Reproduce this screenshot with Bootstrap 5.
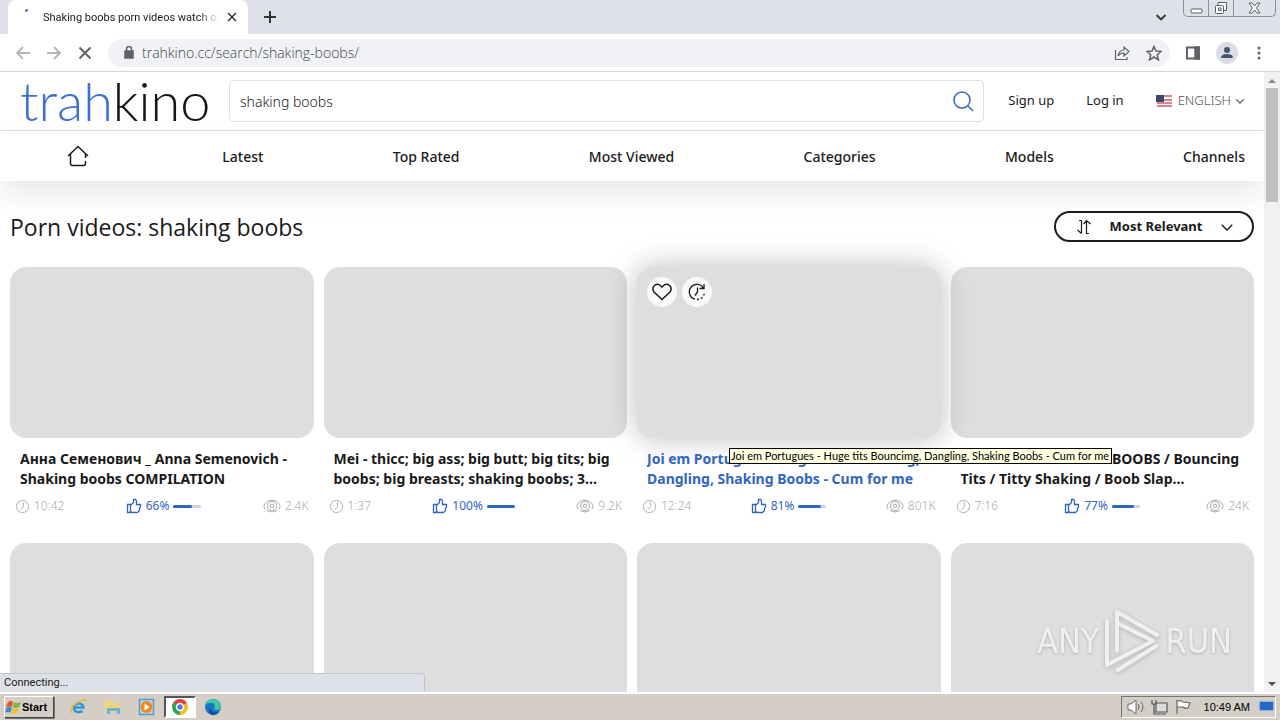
<!DOCTYPE html>
<html lang="en">
<head>
<meta charset="utf-8">
<meta name="viewport" content="width=device-width, initial-scale=1">
<title>trahkino</title>
<link rel="stylesheet" href="https://cdn.jsdelivr.net/npm/bootstrap@5.3.0/dist/css/bootstrap.min.css">
<style>
:root{--ink:#1a1a1a;--blue:#3166c0;--gray:#ababab}
body{font-family:"Noto Sans",sans-serif;font-size:14px;color:var(--ink);height:100vh;fill:none;stroke:currentColor;stroke-width:1.5}
svg{flex:none;display:block}
button{border:0;background:none;padding:0;color:inherit}
a{color:inherit;text-decoration:none}
.tabstrip{height:34px;flex:none;background:#dee1e8}
.tab-active{width:240px;height:34px;margin-left:8px;padding-left:16px;padding-right:11px;background:#fff;border-radius:8px 8px 0 0;font:11px Roboto,sans-serif}
.tab-label{width:176px;overflow:hidden;white-space:nowrap;-webkit-mask-image:linear-gradient(90deg,#000 88%,transparent)}
.win-controls{height:17px;border:1px solid #8d9097;border-top:0;border-radius:0 0 5px 5px;color:#5c5f66}
.win-controls button{width:25px;display:flex;justify-content:center;align-items:center;border-right:1px solid #8d9097}
.win-controls button:last-child{width:41px;border:0}
.toolbar{height:38px;flex:none;border-bottom:1px solid #d5d5d5;color:#5f6368}
.omnibox{height:28px;border-radius:14px;background:#f0f2f5}
.omnibox input{border:0;background:none;outline:0;color:#44474b;font:300 14px "Open Sans",sans-serif}
.avatar{width:22px;height:22px;background:#dadde4;color:#48536f}
.viewport{min-height:0}
.page-scroll{overflow:hidden;min-width:0}
.site-header{height:59px;border-bottom:1px solid #ddd;padding:0 19px 0 20px}
.logo{font:300 54px/58px Lato,sans-serif;width:193px;color:#151515}
.logo span{color:#3c70d8}
.search-box{height:42px;border:1px solid #dcdfe5;border-radius:5px;padding:0 9px 0 10px}
.search-box input{border:0;outline:0;min-width:0;font-size:14px;color:#222;font-weight:300}
.account{font-size:13px}
.lang{color:#555;font-size:13px;font-weight:300}
.site-nav{height:50px;padding:0 19px 0 67px;font-weight:500;box-shadow:0 14px 30px rgba(0,0,0,.09)}
.home-link{padding-right:4px}
.headline{font:400 23px/32px "Open Sans",sans-serif;margin:0}
.sort-btn{width:200px;height:31px;border:2px solid #1b1b1b;border-radius:16px;font-size:13px;font-weight:700;padding:0 18px 0 20px}
.listing{padding:30px 10px 0}
.video-grid{display:grid;grid-template-columns:repeat(4,1fr);gap:27px 10px;margin-top:24px}
.thumb{height:171px;border-radius:16px;background:#dedede;padding:10px;gap:5px}
.video{height:249px}
.video.is-hover{z-index:2}
.is-hover .thumb{box-shadow:0 0 30px rgba(0,0,0,.27)}
.is-hover .video-title{color:var(--blue)}
.video-title{font-size:14px;line-height:20px;font-weight:700;margin:11px 10px 0;height:40px;display:-webkit-box;-webkit-line-clamp:2;-webkit-box-orient:vertical;overflow:hidden}
.meta{margin:8px 5px 0;font-size:12px;line-height:18px;color:var(--gray);font-weight:300}
.meta svg{stroke-width:1}
.likes{color:var(--blue);font-weight:400}
.likes svg{stroke-width:1.3}
.rate{width:28px;height:3px;background:#ccd3df;border-radius:2px}
.rate i{display:block;height:3px;background:var(--blue);border-radius:2px}
.round-btn{width:30px;height:30px;border-radius:50%;background:#f9f9f9}
.tip{left:92px;top:181px;border:1px solid #000;background:#ffffe1;color:#000;font:11px/14px Lato,sans-serif;white-space:nowrap;padding:0 2px 0 1px}
.scroll-rail{width:16px;background:#f1f1f1}
.scroll-thumb{width:12px;height:114px;background:#c1c1c1}
.status{left:0;bottom:0;width:425px;height:19px;background:#dee1e8;border:1px solid #c2c5cb;border-left:0;border-bottom:0;border-radius:0 3px 0 0;font:11px/18px Roboto,sans-serif;padding-left:4px;z-index:4}
.watermark{right:48px;bottom:19px;z-index:3;color:#f3f3f3;font:400 34px/64px "DejaVu Sans Condensed",sans-serif;text-shadow:0 1px 3px #aaa;opacity:.9}
.watermark svg{filter:drop-shadow(0 1px 2px #aaa)}
.taskbar{height:28px;flex:none;background:#d5cec6;border-top:2px solid #fff;font:11px "Liberation Sans",sans-serif;color:#000}
.start{height:22px;width:50px;border:1px solid;border-color:#fff #444 #444 #fff;box-shadow:1px 1px #777;font-weight:700;font-size:11px}
.task-on{width:32px;height:22px;background:#fff;border:2px solid;border-color:#555 #fff #fff #555}
.tray{height:22px;border:1px solid;border-color:#777 #fff #fff #777}
</style>
</head>
<body class="d-flex flex-column overflow-hidden">
<svg width="0" height="0" class="position-absolute">
<symbol id="clock" viewBox="0 0 16 16"><circle cx="8" cy="8" r="6.5"/><path d="M9 3.500V8L6 11.500"/></symbol>
<symbol id="thumb" viewBox="0 0 16 16"><path d="M1.500 6.500h3v8h-3zM4.500 7.500L7.500 4.500V1.500h2L10.500 3v3.500h4v2l-1 2v2l-2 2h-5l-2-1"/></symbol>
<symbol id="eye" viewBox="0 0 18 16"><path d="M2 11Q-.5 8 2 5.500Q9-1.500 16 5.500Q18.500 8 16 11M4 12.500Q9 15.500 14 12.500"/><circle cx="9" cy="8" r="4.500"/><circle cx="9" cy="8" r="1.800"/></symbol>
<symbol id="chev" viewBox="0 0 12 12"><path d="M1.500 4L6 8.500L10.500 4"/></symbol>
</svg>

<div class="tabstrip d-flex align-items-start">
  <div class="tab-active d-flex align-items-center">
    <svg width="19" height="34"><path d="M1 11l3-1" stroke="#4867b5" stroke-width="2"/></svg>
    <span class="tab-label">Shaking boobs porn videos watch on</span>
    <button class="ms-auto" aria-label="Close tab"><svg width="10" height="10" stroke="#333"><path d="M1 1l8 8M9 1l-8 8"/></svg></button>
  </div>
  <button class="ms-3 align-self-center" aria-label="New tab"><svg width="12" height="12" stroke="#333" stroke-width="2"><path d="M6 0v12M0 6h12"/></svg></button>
  <button class="ms-auto me-3 align-self-center" aria-label="Search tabs"><svg width="12" height="12" stroke="#333" stroke-width="1.800"><use href="#chev"/></svg></button>
  <div class="win-controls d-flex me-1">
    <button aria-label="Minimize"><svg width="13" height="14" stroke-width="1"><rect x="1" y="8" width="11" height="4" rx="1" fill="#fff"/></svg></button>
    <button aria-label="Restore"><svg width="14" height="14" stroke-width="1"><path d="M4 4V1.500h8.500v8H10" fill="#fff"/><rect x="1.500" y="4.500" width="8" height="8" rx="1" fill="#fff"/><rect x="4.500" y="7" width="2.500" height="2.500"/></svg></button>
    <button aria-label="Close"><svg width="13" height="12" stroke-width="1"><path d="M1 1h3l2.500 3L9 1h3L8.500 6l3.500 5H9L6.500 8 4 11H1l3.500-5z" fill="#fff"/></svg></button>
  </div>
</div>

<div class="toolbar d-flex align-items-center">
  <button class="ms-3" aria-label="Back"><svg width="14" height="14" stroke="#b4b5b8" stroke-width="1.800"><path d="M14 7H1M7 1L1 7l6 6"/></svg></button>
  <button class="ms-3" aria-label="Forward"><svg width="16" height="14" stroke="#b4b5b8" stroke-width="1.800"><path d="M1 7h13M8 1l6 6-6 6"/></svg></button>
  <button class="ms-3 me-3" aria-label="Stop"><svg width="14" height="14" stroke-width="2"><path d="M1.500 1.500l11 11M12.500 1.500l-11 11"/></svg></button>
  <div class="omnibox d-flex align-items-center flex-grow-1 ps-3 pe-1">
    <svg width="10" height="13"><path d="M1 5h8v7H1z" fill="#5f6368"/><path d="M2.500 5V3a2.500 2.500 0 015 0v2"/></svg>
    <input class="flex-grow-1 ms-2 p-0" aria-label="Address" value="trahkino.cc/search/shaking-boobs/">
    <svg width="16" height="16" class="me-3" stroke-width="1.200"><path d="M1.500 5v9.500H13V12M4 11q1-6 6-6V2l5 4.500-5 4.500V8q-4 0-6 3z"/></svg>
    <svg width="16" height="16" class="me-1"><path d="M8 1.500l2 4.600 5 .4-3.800 3.300 1.200 5L8 12l-4.400 2.800 1.200-5L1 6.500l5-.4z"/></svg>
  </div>
  <svg width="14" height="14" class="ms-3"><path d="M1 1.500h12v11H1z" stroke-width="2"/><path d="M9 1h4v12H9z" fill="#5f6368"/></svg>
  <div class="avatar rounded-circle d-flex justify-content-center align-items-center ms-3 me-3"><svg width="14" height="14" fill="#48536f" stroke="none"><circle cx="7" cy="4" r="3"/><path d="M1 12q0-4 6-4t6 4z"/></svg></div>
  <button class="me-3" aria-label="Menu"><svg width="10" height="14" fill="#5f6368" stroke="none"><circle cx="5" cy="2" r="1.500"/><circle cx="5" cy="7" r="1.500"/><circle cx="5" cy="12" r="1.500"/></svg></button>
</div>

<div class="viewport d-flex flex-grow-1 position-relative">
  <main class="page-scroll flex-grow-1">
    <header class="site-header d-flex align-items-center">
      <a class="logo" href="#"><span>trah</span>kino</a>
      <form class="search-box d-flex align-items-center flex-grow-1 ms-3 me-4">
        <input class="flex-grow-1 p-0" aria-label="Search" value="shaking boobs">
        <button type="button" aria-label="Search"><svg width="22" height="22" stroke="#3166c0"><circle cx="10" cy="10" r="8"/><path d="M16 16l5 5"/></svg></button>
      </form>
      <a href="#" class="account">Sign up</a>
      <a href="#" class="account ms-4 ps-2">Log in</a>
      <button class="lang d-flex align-items-center ms-4 ps-2"><svg width="18" height="12" class="me-1"><path d="M1 1h15M1 5h15M1 8h15M1 11h15" stroke="#d05b68"/><path d="M0 0h8v7H0z" fill="#3c4673" stroke="none"/></svg>ENGLISH<svg width="10" height="10" class="ms-1"><use href="#chev"/></svg></button>
    </header>
    <nav class="site-nav d-flex align-items-center justify-content-between">
      <a href="#" class="home-link" aria-label="Home"><svg width="22" height="22"><path d="M1 11L11 1.500 21 11M3.500 9v9.500q0 2 2 2h11q2 0 2-2V16M18.500 13V9"/></svg></a>
      <a href="#">Latest</a><a href="#">Top Rated</a><a href="#">Most Viewed</a><a href="#">Categories</a><a href="#">Models</a><a href="#">Channels</a>
    </nav>
    <section class="listing">
      <div class="d-flex justify-content-between align-items-start">
        <h1 class="headline">Porn videos: shaking boobs</h1>
        <button class="sort-btn d-flex align-items-center justify-content-between"><svg width="16" height="16" stroke-width="1.200"><path d="M5.500 1v13M1.500 11l4 3.500M3 1.500h2.500M10.500 15V2M7.500 5l3-3.500 4 3.500M10.500 14.500H13"/></svg>Most Relevant<svg width="14" height="14" stroke-width="1.200"><use href="#chev"/></svg></button>
      </div>
      <div class="video-grid">
        <article class="video">
          <div class="thumb"></div>
          <h2 class="video-title"><a href="#">Анна Семенович _ Anna Semenovich - Shaking boobs COMPILATION</a></h2>
          <div class="meta d-flex justify-content-between"><span class="d-flex align-items-center gap-1"><svg width="15" height="15"><use href="#clock"/></svg>10:42</span><span class="likes d-flex align-items-center gap-1"><svg width="16" height="16"><use href="#thumb"/></svg>66%<span class="rate"><i style="width:66%"></i></span></span><span class="d-flex align-items-center gap-1"><svg width="18" height="16"><use href="#eye"/></svg>2.4K</span></div>
        </article>
        <article class="video">
          <div class="thumb"></div>
          <h2 class="video-title"><a href="#">Mei - thicc; big ass; big butt; big tits; big boobs; big breasts; shaking boobs; 3...</a></h2>
          <div class="meta d-flex justify-content-between"><span class="d-flex align-items-center gap-1"><svg width="15" height="15"><use href="#clock"/></svg>1:37</span><span class="likes d-flex align-items-center gap-1"><svg width="16" height="16"><use href="#thumb"/></svg>100%<span class="rate"><i style="width:100%"></i></span></span><span class="d-flex align-items-center gap-1"><svg width="18" height="16"><use href="#eye"/></svg>9.2K</span></div>
        </article>
        <article class="video is-hover position-relative">
          <div class="thumb d-flex">
            <button class="round-btn d-flex align-items-center justify-content-center" aria-label="Favourite"><svg width="20" height="18"><path d="M10 16.500L2 9Q-.5 5 2.500 2.500 6-.5 10 4q4-4.500 7.500-1.500 3 2.500.5 6.500z"/></svg></button>
            <button class="round-btn d-flex align-items-center justify-content-center" aria-label="Watch later"><svg width="18" height="18" stroke-width="1.300"><path d="M15.500 5.500A7.500 7.500 0 1 0 7 16.200M16 1v4.500h-4.500M9.500 4.500V9L7 12.500"/><path d="M9 16.500A7.500 7.500 0 0 0 16.500 9" stroke-dasharray="2 2"/></svg></button>
          </div>
          <h2 class="video-title"><a href="#">Joi em Portugues - Huge tits Bouncimg, Dangling, Shaking Boobs - Cum for me</a></h2>
          <div class="meta d-flex justify-content-between"><span class="d-flex align-items-center gap-1"><svg width="15" height="15"><use href="#clock"/></svg>12:24</span><span class="likes d-flex align-items-center gap-1"><svg width="16" height="16"><use href="#thumb"/></svg>81%<span class="rate"><i style="width:81%"></i></span></span><span class="d-flex align-items-center gap-1"><svg width="18" height="16"><use href="#eye"/></svg>801K</span></div>
          <div class="tip position-absolute" role="tooltip">Joi em Portugues - Huge tits Bouncimg, Dangling, Shaking Boobs - Cum for me</div>
        </article>
        <article class="video">
          <div class="thumb"></div>
          <h2 class="video-title"><a href="#">SHAKING HUGE TITS : BOOBS / Bouncing Tits / Titty Shaking / Boob Slap...</a></h2>
          <div class="meta d-flex justify-content-between"><span class="d-flex align-items-center gap-1"><svg width="15" height="15"><use href="#clock"/></svg>7:16</span><span class="likes d-flex align-items-center gap-1"><svg width="16" height="16"><use href="#thumb"/></svg>77%<span class="rate"><i style="width:77%"></i></span></span><span class="d-flex align-items-center gap-1"><svg width="18" height="16"><use href="#eye"/></svg>24K</span></div>
        </article>
        <article class="video"><div class="thumb"></div></article>
        <article class="video"><div class="thumb"></div></article>
        <article class="video"><div class="thumb"></div></article>
        <article class="video"><div class="thumb"></div></article>
      </div>
    </section>
  </main>
  <div class="scroll-rail d-flex flex-column align-items-center">
    <svg width="16" height="16" fill="#8a8a8a" stroke="none"><path d="M4 11l4-4 4 4z"/></svg>
    <div class="scroll-thumb"></div>
    <svg width="16" height="16" class="mt-auto" fill="#505050" stroke="none"><path d="M4 6l4 4 4-4z"/></svg>
  </div>
  <div class="watermark position-absolute d-flex align-items-center gap-1">ANY<svg width="58" height="64" stroke="#f3f3f3" stroke-width="4" stroke-linejoin="round" stroke-linecap="round"><path d="M4 12v44L50 32 14 14v28M14 3v11M14 3l40 23M15 61l38-24"/></svg>RUN</div>
  <div class="status position-absolute">Connecting...</div>
</div>

<footer class="taskbar d-flex align-items-center">
  <button class="start d-flex align-items-center ms-1 me-2"><svg width="17" height="17" stroke="none"><path fill="#e2582c" d="M3 3q3-2 5 0L7 8Q4 7 1 8z"/><path fill="#7bb543" d="M9 3q3 2 7 0l-2 5q-3 2-6 0z"/><path fill="#3c8bd0" d="M1 9q3-2 6 0l-2 5q-2-2-5 0z"/><path fill="#f5c02c" d="M8 9q3 2 6 0l-2 5q-3 2-6 0z"/></svg>Start</button>
  <div class="d-flex align-items-center">
    <button class="px-2" aria-label="Internet Explorer"><svg width="18" height="18"><path d="M4.500 9.500h9A4.800 4.800 0 104 11q2 5 8.500 2" stroke="#2d9ad8" stroke-width="2.500"/><path d="M1 15Q-1 9 10 3q7-3 6 1" stroke="#e3b73c"/></svg></button>
    <button class="px-2" aria-label="Explorer"><svg width="18" height="18" stroke="none"><path d="M1 3h6l2 2h7v9H1z" fill="#f0d576"/><path d="M3 16v-6h13v6h-3v-3H6v3z" fill="#68b5df"/></svg></button>
    <button class="px-2" aria-label="Media Player"><svg width="18" height="18"><path d="M1.500 1.500h14v15h-14z" fill="#b9d7ed" stroke="#579bce"/><circle cx="8.500" cy="9" r="6" fill="#f28a1c" stroke="none"/><path d="M6.500 5.500l5 3.500-5 3.500z" fill="#fff" stroke="none"/></svg></button>
    <button class="task-on d-flex align-items-center justify-content-center" aria-label="Chrome"><svg width="16" height="16"><circle cx="8" cy="8" r="5.500" stroke="#e24234" stroke-width="5" stroke-dasharray="11.600 40" transform="rotate(-150 8 8)"/><circle cx="8" cy="8" r="5.500" stroke="#f9bd20" stroke-width="5" stroke-dasharray="11.600 40" transform="rotate(-30 8 8)"/><circle cx="8" cy="8" r="5.500" stroke="#2fa34f" stroke-width="5" stroke-dasharray="11.600 40" transform="rotate(90 8 8)"/><circle cx="8" cy="8" r="3.500" fill="#4380e8" stroke="#fff"/></svg></button>
    <button class="px-2" aria-label="Edge"><svg width="18" height="18" stroke="none"><circle cx="9" cy="9" r="8" fill="#1976c5"/><path d="M1 8Q2 1 9 1q8 0 8 7 0 4-5 4-3-1-1-4-1-4-5-3-4 0-5 3z" fill="#3ec7a2"/><path d="M6 9q0 6 9 5-3 4-7 3-5-3-2-8z" fill="#134c99"/></svg></button>
  </div>
  <div class="tray d-flex align-items-center ms-auto me-1 ps-1">
    <svg width="20" height="18" class="me-1" stroke="#666" stroke-width="1"><path d="M2 6h3l5-4v14l-5-4H2z" fill="#fff"/><path d="M12 6q2 3 0 6M15 4q4 5 0 10"/></svg>
    <svg width="20" height="18" class="me-1" stroke="#555" stroke-width="1.200"><path d="M6 5h11v9H6z" fill="#ddd"/><path d="M8 16h8M2 2v4h4V2M4 6v10h4"/></svg>
    <svg width="18" height="18" stroke="#666" stroke-width="1.200"><path d="M3 2v14M3 3q4-1 6 1l7 1-2 5q-3 1-5-1H3z" fill="#fff"/></svg>
    <span class="mx-2 ps-1">10:49 AM</span>
    <svg width="17" height="16" stroke="#bcd"><path d="M1 2h15v10H1z" fill="#2669c4"/><path d="M5 14h7"/></svg>
  </div>
</footer>
<script src="https://cdn.jsdelivr.net/npm/bootstrap@5.3.0/dist/js/bootstrap.bundle.min.js"></script>
</body>
</html>
